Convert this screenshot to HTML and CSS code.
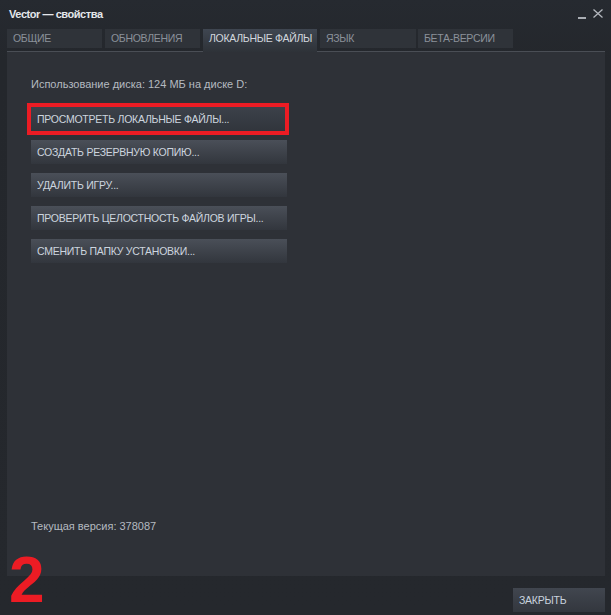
FILE: index.html
```html
<!DOCTYPE html>
<html lang="ru">
<head>
<meta charset="utf-8">
<title>Vector — свойства</title>
<link rel="stylesheet" href="styles.css">
</head>
<body>
<div class="window">
  <div class="titlebar">
    <span class="title">Vector — свойства</span>
    <div class="controls">
      <span class="minimize"></span>
      <svg class="close-x" width="10" height="9" viewBox="0 0 10 9"><path d="M0.5 0.5 L9.5 8.5 M9.5 0.5 L0.5 8.5" stroke="#b4b8be" stroke-width="1.3" fill="none"/></svg>
    </div>
  </div>
  <div class="tabs">
    <div class="tab t1">ОБЩИЕ</div>
    <div class="tab t2">ОБНОВЛЕНИЯ</div>
    <div class="tab t3 active">ЛОКАЛЬНЫЕ ФАЙЛЫ</div>
    <div class="tab t4">ЯЗЫК</div>
    <div class="tab t5">БЕТА-ВЕРСИИ</div>
  </div>
  <div class="panel">
    <div class="disk">Использование диска: 124 МБ на диске D:</div>
    <div class="buttons">
      <div class="btn highlighted">ПРОСМОТРЕТЬ ЛОКАЛЬНЫЕ ФАЙЛЫ...</div>
      <div class="btn">СОЗДАТЬ РЕЗЕРВНУЮ КОПИЮ...</div>
      <div class="btn">УДАЛИТЬ ИГРУ...</div>
      <div class="btn">ПРОВЕРИТЬ ЦЕЛОСТНОСТЬ ФАЙЛОВ ИГРЫ...</div>
      <div class="btn">СМЕНИТЬ ПАПКУ УСТАНОВКИ...</div>
    </div>
    <div class="version">Текущая версия: 378087</div>
  </div>
  <div class="footer">
    <div class="close-btn">ЗАКРЫТЬ</div>
  </div>
  <div class="step">2</div>
</div>
</body>
</html>
```

FILE: styles.css
```css
html, body {
  margin: 0;
  padding: 0;
  background: #25282d;
}
body {
  width: 611px;
  height: 615px;
  overflow: hidden;
  font-family: "Liberation Sans", Arial, sans-serif;
}
.window {
  position: relative;
  width: 611px;
  height: 615px;
  box-sizing: border-box;
  padding: 0 6px 0 7px;
  display: flex;
  flex-direction: column;
  background: linear-gradient(#262a30, #24272c 60px, #25282d);
}
.titlebar {
  height: 29px;
  box-sizing: border-box;
  display: flex;
  justify-content: space-between;
  align-items: flex-start;
  padding: 7px 2px 0 2px;
}
.title {
  color: #e4e7eb;
  font-size: 11px;
  font-weight: bold;
  letter-spacing: -0.45px;
  line-height: 14px;
}
.controls {
  display: flex;
  align-items: flex-start;
  gap: 7px;
  padding-top: 2px;
}
.minimize {
  display: block;
  width: 8px;
  height: 2px;
  background: #a9adb3;
  margin-top: 8px;
}
.close-x {
  display: block;
}
.tabs {
  display: flex;
  align-items: flex-start;
  height: 23px;
  box-sizing: border-box;
  border-bottom: 1px solid #4a4e55;
}
.tab {
  height: 19px;
  box-sizing: border-box;
  padding-left: 6px;
  background: #2f3339;
  color: #8b9199;
  font-size: 10.5px;
  letter-spacing: -0.3px;
  line-height: 19px;
  white-space: nowrap;
  margin-right: 3px;
}
.t1 { width: 95px; }
.t2 { width: 95px; }
.t3 { width: 114px; }
.t4 { width: 96px; margin-right: 2px; }
.t5 { width: 95px; }
.tab.active {
  height: 23px;
  margin-bottom: -1px;
  background: linear-gradient(#3f4651, #2e3238);
  color: #d2d7de;
  position: relative;
}
.panel {
  flex: 1;
  background: #2e3137;
  padding: 25px 24px 43px 24px;
  display: flex;
  flex-direction: column;
}
.disk, .version {
  color: #b5bac0;
  font-size: 11px;
  line-height: 14px;
}
.disk {
  margin-bottom: 16px;
}
.buttons {
  display: flex;
  flex-direction: column;
  gap: 9px;
  align-items: flex-start;
}
.btn {
  width: 256px;
  height: 24px;
  box-sizing: border-box;
  padding-left: 6px;
  background: linear-gradient(#4a4f58, #32363d);
  color: #cdd5df;
  font-size: 10.5px;
  letter-spacing: -0.25px;
  line-height: 24px;
  white-space: nowrap;
}
.btn.highlighted {
  width: 254px;
  background: linear-gradient(#3c414a, #31353c);
  outline: 4px solid #ec1c24;
}
.version {
  margin-top: auto;
}
.footer {
  height: 39px;
  box-sizing: border-box;
  padding-top: 12px;
  display: flex;
  justify-content: flex-end;
}
.close-btn {
  width: 92px;
  height: 24px;
  box-sizing: border-box;
  padding-left: 6px;
  background: linear-gradient(#41464f, #33373e);
  color: #c9d3de;
  font-size: 10.5px;
  letter-spacing: -0.25px;
  line-height: 24px;
}
.step {
  position: absolute;
  left: 9px;
  top: 557px;
  color: #ec1c24;
  font-size: 64px;
  font-weight: bold;
  line-height: 46px;
}
```
